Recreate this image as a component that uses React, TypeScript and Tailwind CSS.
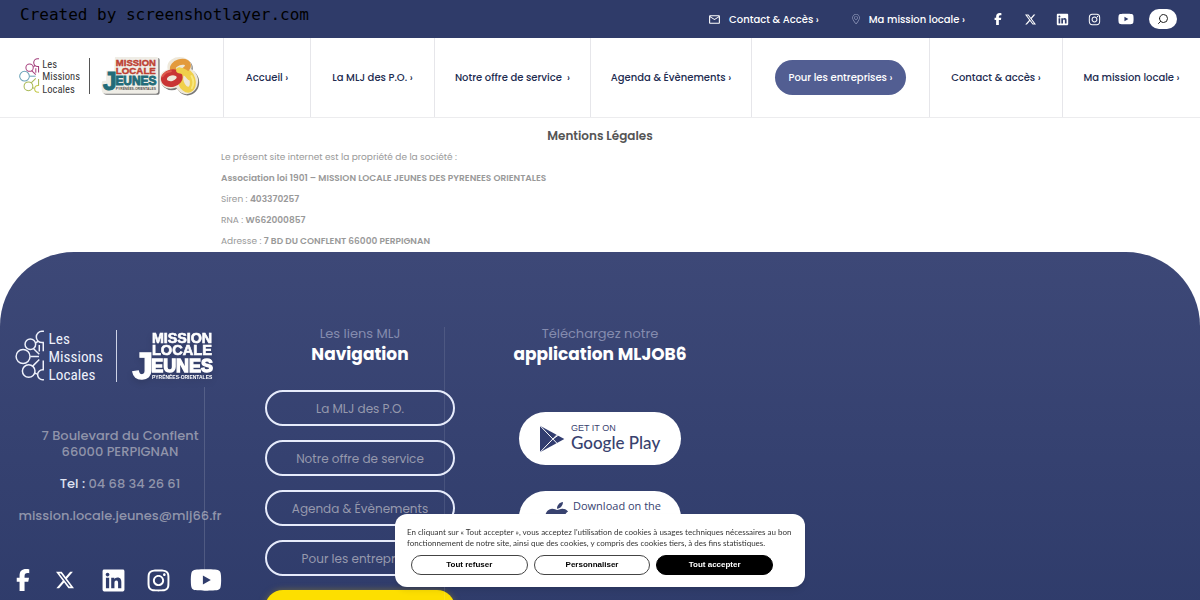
import type { ReactNode } from "react";
import { BsTwitterX } from "react-icons/bs";
import { FaApple, FaFacebookF, FaInstagram, FaLinkedin, FaYoutube } from "react-icons/fa6";
import { FiSearch } from "react-icons/fi";
import { MdMailOutline } from "react-icons/md";
import { SlLocationPin } from "react-icons/sl";

const navItems = [
  { label: "Accueil ›" },
  { label: "La MLJ des P.O. ›" },
  { label: "Notre offre de service  ›" },
  { label: "Agenda & Évènements ›" },
  { label: "Pour les entreprises ›", highlight: true },
  { label: "Contact & accès ›" },
  { label: "Ma mission locale ›" },
];

const footerLinks = ["La MLJ des P.O.", "Notre offre de service", "Agenda & Évènements", "Pour les entreprises"];

const socials = [
  { name: "Facebook", Icon: FaFacebookF, small: "size-3", large: "size-[22px]", cell: "w-[14px]" },
  { name: "X", Icon: BsTwitterX, small: "size-[11px]", large: "size-[18px]", cell: "w-[30px]" },
  { name: "LinkedIn", Icon: FaLinkedin, small: "size-[13px]", large: "size-[25px]", cell: "w-[26px]" },
  { name: "Instagram", Icon: FaInstagram, small: "size-[13px]", large: "size-[25px]", cell: "w-6" },
  { name: "YouTube", Icon: FaYoutube, small: "size-4", large: "size-8", cell: "w-8" },
];

function MissionsLocalesLogo({ className, colored = false }: { className: string; colored?: boolean }) {
  const c = (color: string) => (colored ? color : "#eef1fb");
  return (
    <svg viewBox="45 55 265 160" className={className} role="img" aria-label="Les Missions Locales">
      <g fill="none" strokeWidth="4.5">
        <path d="M132 62 h-6 a17 17 0 0 0 0 34 h6 M130 96 v26 M115 91 l-7 6" stroke={c("#a03a78")} />
        <circle cx="91" cy="101" r="16" stroke={c("#a8437f")} />
        <path d="M100 114 l18 17 M118 103 v20" stroke={c("#a8437f")} />
        <circle cx="69" cy="138" r="21" stroke={c("#6ba3b8")} />
        <path d="M91 138 h26" stroke={c("#6ba3b8")} />
        <circle cx="86" cy="182" r="19" stroke={c("#a9b957")} />
        <path d="M98 167 l20 -20 M130 150 v28 M103 187 l8 4" stroke={c("#a9b957")} />
        <path d="M132 178 h-4 a15 15 0 0 0 0 30 h4" stroke={c("#c3c94a")} />
      </g>
      <g fill={c("#3a3a3c")} fontFamily="'Roboto Condensed',Roboto,'Liberation Sans',sans-serif" fontWeight="400" fontSize="46">
        <text x="146" y="101">Les</text>
        <text x="146" y="155">Missions</text>
        <text x="146" y="209">Locales</text>
      </g>
    </svg>
  );
}

function JeunesWords({ red, teal, grey }: { red: string; teal: string; grey: string }) {
  return (
    <g fontFamily="'Liberation Sans',sans-serif" fontWeight="bold">
      <text x="456" y="99" fontSize="43" fill={red} stroke={red} strokeWidth="2">MISSION</text>
      <text x="456" y="137" fontSize="44" fill={red} stroke={red} strokeWidth="2">LOCALE</text>
      <text x="397" y="210" fontSize="114" fill={teal} stroke={teal} strokeWidth="4">J</text>
      <text x="454" y="187" fontSize="54" fill={teal} stroke={teal} strokeWidth="4">EUNES</text>
      <text x="456" y="210" fontSize="15" fill={grey}>PYRÉNÉES-ORIENTALES</text>
    </g>
  );
}

function JeunesLogo() {
  return (
    <svg viewBox="390 50 450 190" className="h-[42px] w-[100px]" role="img" aria-label="Mission Locale Jeunes Pyrénées-Orientales">
      <path d="M458 64 h188 q8 0 8 8 v146 q0 12 -12 12 h-228 q-16 0 -16 -18 v-30 q0 -10 10 -10 h10 v-46 h36 z" fill="#777" />
      <path d="M452 59 h188 q8 0 8 8 v146 q0 12 -12 12 h-228 q-16 0 -16 -18 v-30 q0 -10 10 -10 h10 v-46 h36 z" fill="#efede6" />
      <g transform="translate(5 6)" stroke="#777" strokeWidth="42" fill="#777">
        <ellipse cx="744" cy="104" rx="34" ry="24" />
        <ellipse cx="704" cy="158" rx="28" ry="24" />
        <ellipse cx="775" cy="168" rx="32" ry="38" />
      </g>
      <g stroke="#eee8da" strokeWidth="42" fill="#eee8da">
        <ellipse cx="744" cy="104" rx="34" ry="24" />
        <ellipse cx="704" cy="158" rx="28" ry="24" />
        <ellipse cx="775" cy="168" rx="32" ry="38" />
      </g>
      <g fill="none" strokeWidth="27" strokeLinecap="round">
        <ellipse cx="776" cy="166" rx="27" ry="42" stroke="#f0d04b" transform="rotate(-18 776 166)" />
        <ellipse cx="748" cy="104" rx="35" ry="22" stroke="#e39a3c" transform="rotate(-18 748 104)" />
        <ellipse cx="709" cy="155" rx="36" ry="26" stroke="#c93434" transform="rotate(-14 709 155)" />
        <path d="M742 119 q28 4 48 31" stroke="#f0d04b" />
        <path d="M667 146 q12 -21 38 -23" stroke="#df5b4c" strokeWidth="9" />
        <path d="M798 145 q16 28 2 55" stroke="#f8e87d" strokeWidth="9" />
      </g>
      <JeunesWords red="#bd3f32" teal="#236b78" grey="#55514c" />
    </svg>
  );
}

function PlayBadge() {
  return (
    <a href="#" className="flex h-[53px] w-[162px] items-center rounded-full bg-white pl-5 text-[#38426f]">
      <svg viewBox="0 0 78 84" className="h-7 w-[26px] shrink-0" aria-hidden="true">
        <path d="M3 2 L76 42 L3 82 Z" fill="#323d70" />
        <path d="M3 2 L56 57 M3 82 L56 27 M42 42 L60 29" fill="none" stroke="white" strokeWidth="3" />
      </svg>
      <span className="ml-[6px] flex flex-col whitespace-nowrap pb-1">
        <span className="font-['Liberation_Sans',sans-serif] text-[9px] leading-[11px]">GET IT ON</span>
        <span className="font-[Lato,sans-serif] text-[17px] font-medium leading-[17px]">Google Play</span>
      </span>
    </a>
  );
}

function AppleBadge() {
  return (
    <a href="#" className="flex h-[53px] w-[162px] items-center rounded-full bg-white pb-1 pl-[22px] text-[#38426f]">
      <FaApple className="size-8 shrink-0" />
      <span className="flex flex-col whitespace-nowrap">
        <span className="font-['Open_Sans',sans-serif] text-[11px] leading-[13px]">Download on the</span>
        <span className="font-[Lato,sans-serif] text-[20px] font-bold leading-5">App Store</span>
      </span>
    </a>
  );
}

function FooterTitle({ small, big }: { small: string; big: string }) {
  return (
    <h2 className="text-center">
      <span className="block text-[13px] leading-[21px] text-[#858caf]">{small}</span>
      <span className="block text-[17px] font-bold leading-[21px] text-white">{big}</span>
    </h2>
  );
}

function CookieButton({ children, dark = false }: { children: ReactNode; dark?: boolean }) {
  return (
    <button
      type="button"
      className={`h-5 flex-1 rounded-full border text-[8px] font-bold ${dark ? "border-black bg-black text-white" : "border-[#444] bg-white text-black"}`}
    >
      {children}
    </button>
  );
}

export default function App() {
  return (
    <div className="relative bg-white font-[Poppins,Inter,sans-serif]">
      <div className="flex h-[38px] items-center justify-between bg-[#2f3b69] pl-5 pr-[23px] text-[10px] text-white">
        <span className="pb-2 font-['DejaVu_Sans_Mono',monospace] text-base text-black">Created by screenshotlayer.com</span>
        <div className="flex items-center whitespace-nowrap">
          <a href="#" className="flex items-center gap-2 font-medium">
            <MdMailOutline className="size-[13px]" />
            Contact & Accès ›
          </a>
          <a href="#" className="ml-8 flex items-center gap-2 font-medium">
            <SlLocationPin className="size-[10px] text-[#9aa2c2]" />
            Ma mission locale ›
          </a>
          <div className="ml-[17px] flex">
            {socials.map(({ name, Icon, small }) => (
              <a key={name} href="#" aria-label={name} className="flex w-8 items-center justify-center">
                <Icon className={small} />
              </a>
            ))}
          </div>
          <button type="button" aria-label="Rechercher" className="ml-[7px] flex h-5 w-7 items-center justify-center rounded-full bg-white text-[#222]">
            <FiSearch className="size-3 -scale-x-100" />
          </button>
        </div>
      </div>

      <header className="grid h-20 grid-cols-[223px_87fr_124fr_156fr_161fr_178fr_133fr_138fr] border-b border-[#ececee]">
        <div className="flex items-center pb-1 pl-[19px]">
          <MissionsLocalesLogo className="h-[37px] w-[61px]" colored />
          <span className="ml-[9px] mr-[11px] h-9 w-px bg-[#555]" />
          <JeunesLogo />
        </div>
        {navItems.map((item) => (
          <a key={item.label} href="#" className="flex items-center justify-center whitespace-pre border-l border-[#e6e6ea] text-[10px] font-medium text-[#222b50]">
            {item.highlight ? <span className="rounded-full bg-[#525e92] px-[13px] py-[10px] text-white">{item.label}</span> : item.label}
          </a>
        ))}
      </header>

      <main className="mx-auto max-w-[758px] text-[9px] leading-[21px] text-[#999]">
        <h1 className="pb-px pt-2 text-center text-xs font-semibold leading-5 text-[#555]">Mentions Légales</h1>
        <p>Le présent site internet est la propriété de la société :</p>
        <p className="font-semibold">Association loi 1901 – MISSION LOCALE JEUNES DES PYRENEES ORIENTALES</p>
        <p>Siren : <strong className="font-semibold">403370257</strong></p>
        <p>RNA : <strong className="font-semibold">W662000857</strong></p>
        <p>Adresse : <strong className="font-semibold">7 BD DU CONFLENT 66000 PERPIGNAN</strong></p>
      </main>

      <footer className="grid grid-cols-5 overflow-hidden rounded-t-[74px] bg-linear-to-b from-[#3d4877] to-[#2d3a69] pb-10 pt-[71px]">
        <div className="relative flex flex-col items-center text-[13px] font-medium leading-4 text-[#9094aa]">
          <span className="absolute bottom-14 left-[85%] top-16 w-px bg-white/15" />
          <div className="flex items-center self-start pl-[15px] pt-[6px]">
            <MissionsLocalesLogo className="h-[53px] w-[88px]" />
            <span className="ml-[13px] mr-[15px] h-[52px] w-px bg-[#cdd2e6]" />
            <svg viewBox="396 62 250 155" className="h-[52px] w-[83px] drop-shadow-md" role="img" aria-label="Mission Locale Jeunes">
              <JeunesWords red="#fff" teal="#fff" grey="#fff" />
            </svg>
          </div>
          <address className="mt-[46px] text-center not-italic">
            7 Boulevard du Conflent
            <br />
            66000 PERPIGNAN
          </address>
          <p className="mt-4"><span className="text-[#dfe2f0]">Tel :</span> 04 68 34 26 61</p>
          <a href="mailto:mission.locale.jeunes@mlj66.fr" className="mt-4">mission.locale.jeunes@mlj66.fr</a>
          <div className="mt-10 flex w-full items-center justify-between pl-4 pr-[18px] text-white">
            {socials.map(({ name, Icon, large, cell }) => (
              <a key={name} href="#" aria-label={name} className={`flex h-8 items-center justify-center ${cell}`}>
                <Icon className={`shrink-0 ${large}`} />
              </a>
            ))}
          </div>
        </div>

        <nav className="relative flex flex-col items-center">
          <span className="absolute bottom-0 left-[85%] top-1 w-px bg-white/10" />
          <FooterTitle small="Les liens MLJ" big="Navigation" />
          <div className="mt-[25px] flex flex-col gap-[14px] text-xs text-[#9699ad]">
            {footerLinks.map((link) => (
              <a key={link} href="#" className="flex h-9 w-[190px] items-center justify-center rounded-full border-2 border-[#e6ebfb] pt-px">
                {link}
              </a>
            ))}
            <a href="#" className="flex h-9 w-[190px] items-center justify-center rounded-full bg-[#fddf00] font-semibold text-[#2f3b69] shadow-[0_0_6px_#6b6640]">
              Contact & accès
            </a>
          </div>
        </nav>

        <div className="flex flex-col items-center">
          <FooterTitle small="Téléchargez notre" big="application MLJOB6" />
          <div className="mt-[47px] flex flex-col gap-[26px]">
            <PlayBadge />
            <AppleBadge />
          </div>
        </div>
      </footer>

      <section aria-label="Cookies" className="fixed bottom-[13px] left-1/2 w-[410px] -translate-x-1/2 rounded-xl bg-white px-3 pb-3 pt-[13px] font-['Liberation_Sans',sans-serif] shadow-md">
        <p className="font-[Lato,sans-serif] text-[8px] leading-[11px] text-[#333]">
          En cliquant sur « Tout accepter », vous acceptez l'utilisation de cookies à usages techniques nécessaires au bon fonctionnement de notre site, ainsi que des cookies, y compris des cookies tiers, à des fins statistiques.
        </p>
        <div className="mt-[6px] flex gap-[6px] pl-1 pr-5">
          <CookieButton>Tout refuser</CookieButton>
          <CookieButton>Personnaliser</CookieButton>
          <CookieButton dark>Tout accepter</CookieButton>
        </div>
      </section>
    </div>
  );
}
